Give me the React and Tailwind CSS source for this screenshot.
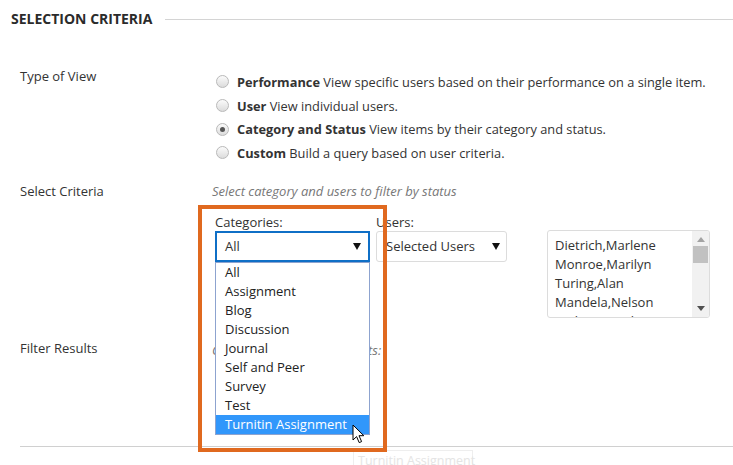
const categories = [
  "All",
  "Assignment",
  "Blog",
  "Discussion",
  "Journal",
  "Self and Peer",
  "Survey",
  "Test",
  "Turnitin Assignment",
];

const users = [
  "Dietrich,Marlene",
  "Monroe,Marilyn",
  "Turing,Alan",
  "Mandela,Nelson",
  "Earhart,Amelia",
];

const views = [
  { title: "Performance", text: "View specific users based on their performance on a single item." },
  { title: "User", text: "View individual users." },
  { title: "Category and Status", text: "View items by their category and status.", checked: true },
  { title: "Custom", text: "Build a query based on user criteria." },
];

function Caret() {
  return (
    <svg width="8" height="7" viewBox="0 0 8 7" className="shrink-0">
      <path d="M0 0 H8 L4 7 Z" fill="#111" />
    </svg>
  );
}

function Radio({ checked }) {
  return (
    <span className="flex h-[13px] w-[13px] shrink-0 items-center justify-center rounded-full border border-[#b9b9b9] bg-gradient-to-b from-[#fbfbfb] to-[#dcdcdc]">
      {checked && <span className="h-[5px] w-[5px] rounded-full bg-[#555]" />}
    </span>
  );
}

function Cursor() {
  return (
    <svg width="14" height="20" viewBox="0 0 14 20">
      <path
        d="M1 1 L1 16 L4.6 12.6 L7.2 18.6 L9.6 17.6 L7 11.7 L11.8 11.7 Z"
        fill="#fff"
        stroke="#000"
        strokeWidth="1"
        strokeLinejoin="round"
      />
    </svg>
  );
}

export default function App() {
  return (
    <div className="relative h-[465px] w-[733px] overflow-hidden bg-white font-['Open_Sans',sans-serif] text-[13px] text-[#333]">
      {/* section header */}
      <div className="flex items-center pl-[11px] pt-[9px]">
        <h2 className="text-[14px] font-bold leading-[20px] text-[#2b2b2b]">SELECTION CRITERIA</h2>
        <div className="ml-[13px] h-px flex-1 bg-[#d4d4d4]" />
      </div>

      {/* type of view */}
      <div className="mt-[37px] flex">
        <div className="w-[212px] shrink-0 pl-[20px] leading-[20px]">Type of View</div>
        <div className="pt-[4px]">
          {views.map((v) => (
            <div key={v.title} className="flex h-[23.7px] items-center pl-[3.5px]">
              <Radio checked={v.checked} />
              <span className="ml-[8.5px] whitespace-nowrap text-[12.8px] leading-[20px]">
                <b className="font-bold">{v.title}</b> {v.text}
              </span>
            </div>
          ))}
        </div>
      </div>

      {/* select criteria */}
      <div className="mt-[16px] flex">
        <div className="w-[212px] shrink-0 pl-[20px] leading-[20px]">Select Criteria</div>
        <div>
          <div className="italic leading-[20px] text-[#777]">Select category and users to filter by status</div>
          <div className="mt-[12px] flex items-start pl-[3px]">
            <div className="relative w-[155px]">
              <div className="leading-[18px]">Categories:</div>
              <div className="flex h-[31px] items-center justify-between border-2 border-[#0f6fc6] bg-white pl-[8px] pr-[7px]">
                <span>All</span>
                <Caret />
              </div>
              {/* open dropdown list */}
              <div className="absolute left-0 top-full z-10 w-[155px] border border-[#8da3cf] bg-white">
                {categories.map((c, i) => (
                  <div
                    key={c}
                    className={
                      i === categories.length - 1
                        ? "bg-[#3197fb] pl-[9px] leading-[19px] text-white"
                        : "pl-[9px] leading-[19px] text-[#222]"
                    }
                  >
                    {c}
                  </div>
                ))}
              </div>
            </div>
            <div className="ml-[6px] w-[131px]">
              <div className="leading-[18px]">Users:</div>
              <div className="flex h-[31px] items-center justify-between rounded-[3px] border border-[#dcdcdc] pl-[9px] pr-[6px]">
                <span>Selected Users</span>
                <Caret />
              </div>
            </div>
            <div className="ml-[40px] mt-[17px] flex h-[88px] w-[163px] overflow-hidden rounded-[3px] border border-[#dcdcdc]">
              <div className="h-full flex-1 overflow-hidden pl-[7px] pt-[5px] leading-[19px]">
                {users.map((u) => (
                  <div key={u} className="whitespace-nowrap">{u}</div>
                ))}
              </div>
              <div className="flex w-[17px] flex-col items-center bg-[#f1f1f1] py-[6px]">
                <svg width="8" height="5" viewBox="0 0 8 5">
                  <path d="M0 5 L4 0 L8 5 Z" fill="#a3a3a3" />
                </svg>
                <div className="mt-[4px] h-[17px] w-[15px] bg-[#c1c1c1]" />
                <div className="flex-1" />
                <svg width="8" height="5" viewBox="0 0 8 5">
                  <path d="M0 0 L8 0 L4 5 Z" fill="#505050" />
                </svg>
              </div>
            </div>
          </div>
        </div>
      </div>

      {/* filter results */}
      <div className="mt-[20px] flex">
        <div className="w-[212px] shrink-0 pl-[20px] leading-[20px]">Filter Results</div>
        <div className="pt-[2px] italic leading-[20px] text-[#777]">Choose status to filter results:</div>
      </div>

      <div className="ml-[20px] mt-[86px] h-px bg-[#d0d0d0]" />
      <div className="ml-[353px] mt-[3px] w-[120px] whitespace-nowrap border border-[#eeeeee] px-[4px] text-[12.5px] leading-[20px] text-[#e4e4e4]">
        Turnitin Assignment
      </div>

      {/* annotation frame */}
      <div className="pointer-events-none absolute left-[198px] top-[205px] z-20 h-[247px] w-[189px] border-4 border-[#e0691f]" />
      {/* mouse pointer */}
      <div className="pointer-events-none absolute left-[352px] top-[424px] z-30">
        <Cursor />
      </div>
    </div>
  );
}
